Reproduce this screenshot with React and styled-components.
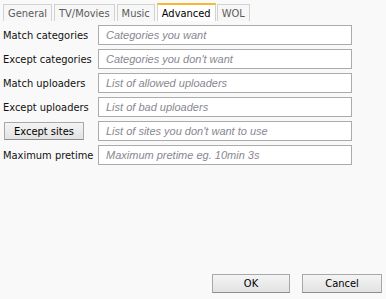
import React from "react";
import styled, { createGlobalStyle } from "styled-components";

const UI_FONT = `"DejaVu Sans Condensed", "Liberation Sans", Arial, sans-serif`;
const PH_FONT = `"Liberation Sans", Arial, sans-serif`;

const Global = createGlobalStyle`
  html, body { margin: 0; padding: 0; }
  body {
    background: #f9f9f9;
    font-family: ${UI_FONT};
    font-size: 11px;
    color: #111;
  }
`;

const Page = styled.div`
  height: 299px;
  display: flex;
  flex-direction: column;
  box-sizing: border-box;
`;

const TabBar = styled.div`
  display: flex;
  align-items: flex-end;
  gap: 2px;
  padding: 3px 0 0 3px;
  height: 21px;
  box-sizing: border-box;
`;

const Tab = styled.div`
  box-sizing: border-box;
  height: ${(p) => (p.$active ? "18px" : "17px")};
  padding: 0 4px;
  margin-right: ${(p) => (p.$active ? "-1px" : "0")};
  display: flex;
  align-items: center;
  border: 1px solid #d2d2d2;
  border-bottom: none;
  border-top: ${(p) => (p.$active ? "2px solid #f5b82e" : "1px solid #d2d2d2")};
  background: ${(p) => (p.$active ? "#ffffff" : "#f7f7f7")};
  color: ${(p) => (p.$active ? "#000" : "#5a5a5a")};
`;

const Form = styled.div`
  display: flex;
  flex-direction: column;
  gap: 4px;
  padding: 4px 0 0 3px;
`;

const Row = styled.div`
  display: flex;
  align-items: center;
  height: 20px;
`;

const Label = styled.div`
  width: 95px;
  flex: none;
  white-space: nowrap;
`;

const Input = styled.input`
  box-sizing: border-box;
  width: 254px;
  height: 20px;
  border: 1px solid #ababab;
  background: #fff;
  padding: 0 7px;
  font: italic 11px ${PH_FONT};
  outline: none;
  &::placeholder { color: #888890; }
`;

const Button = styled.button`
  box-sizing: border-box;
  width: ${(p) => p.$w || "78px"};
  height: ${(p) => p.$h || "19px"};
  margin-left: ${(p) => p.$ml || "0"};
  border: 1px solid #a8a8a8;
  border-bottom-color: #8e8e8e;
  background: linear-gradient(#f4f4f4, #e2e2e2);
  font: 11px ${UI_FONT};
  color: #000;
  padding: 0;
`;

const Footer = styled.div`
  margin-top: auto;
  display: flex;
  justify-content: flex-end;
  gap: 12px;
  padding: 0 4px 6px 0;
`;

const rows = [
  ["Match categories", "Categories you want"],
  ["Except categories", "Categories you don't want"],
  ["Match uploaders", "List of allowed uploaders"],
  ["Except uploaders", "List of bad uploaders"],
  ["Except sites", "List of sites you don't want to use", true],
  ["Maximum pretime", "Maximum pretime eg. 10min 3s"],
];

export default function App() {
  return (
    <Page>
      <Global />
      <TabBar>
        <Tab>General</Tab>
        <Tab>TV/Movies</Tab>
        <Tab>Music</Tab>
        <Tab $active>Advanced</Tab>
        <Tab>WOL</Tab>
      </TabBar>
      <Form>
        {rows.map(([l, p, btn]) => (
          <Row key={l}>
            <Label>
              {btn ? (
                <Button $w="80px" $h="18px" $ml="1px">{l}</Button>
              ) : (
                l
              )}
            </Label>
            <Input placeholder={p} />
          </Row>
        ))}
      </Form>
      <Footer>
        <Button>OK</Button>
        <Button $w="80px">Cancel</Button>
      </Footer>
    </Page>
  );
}
